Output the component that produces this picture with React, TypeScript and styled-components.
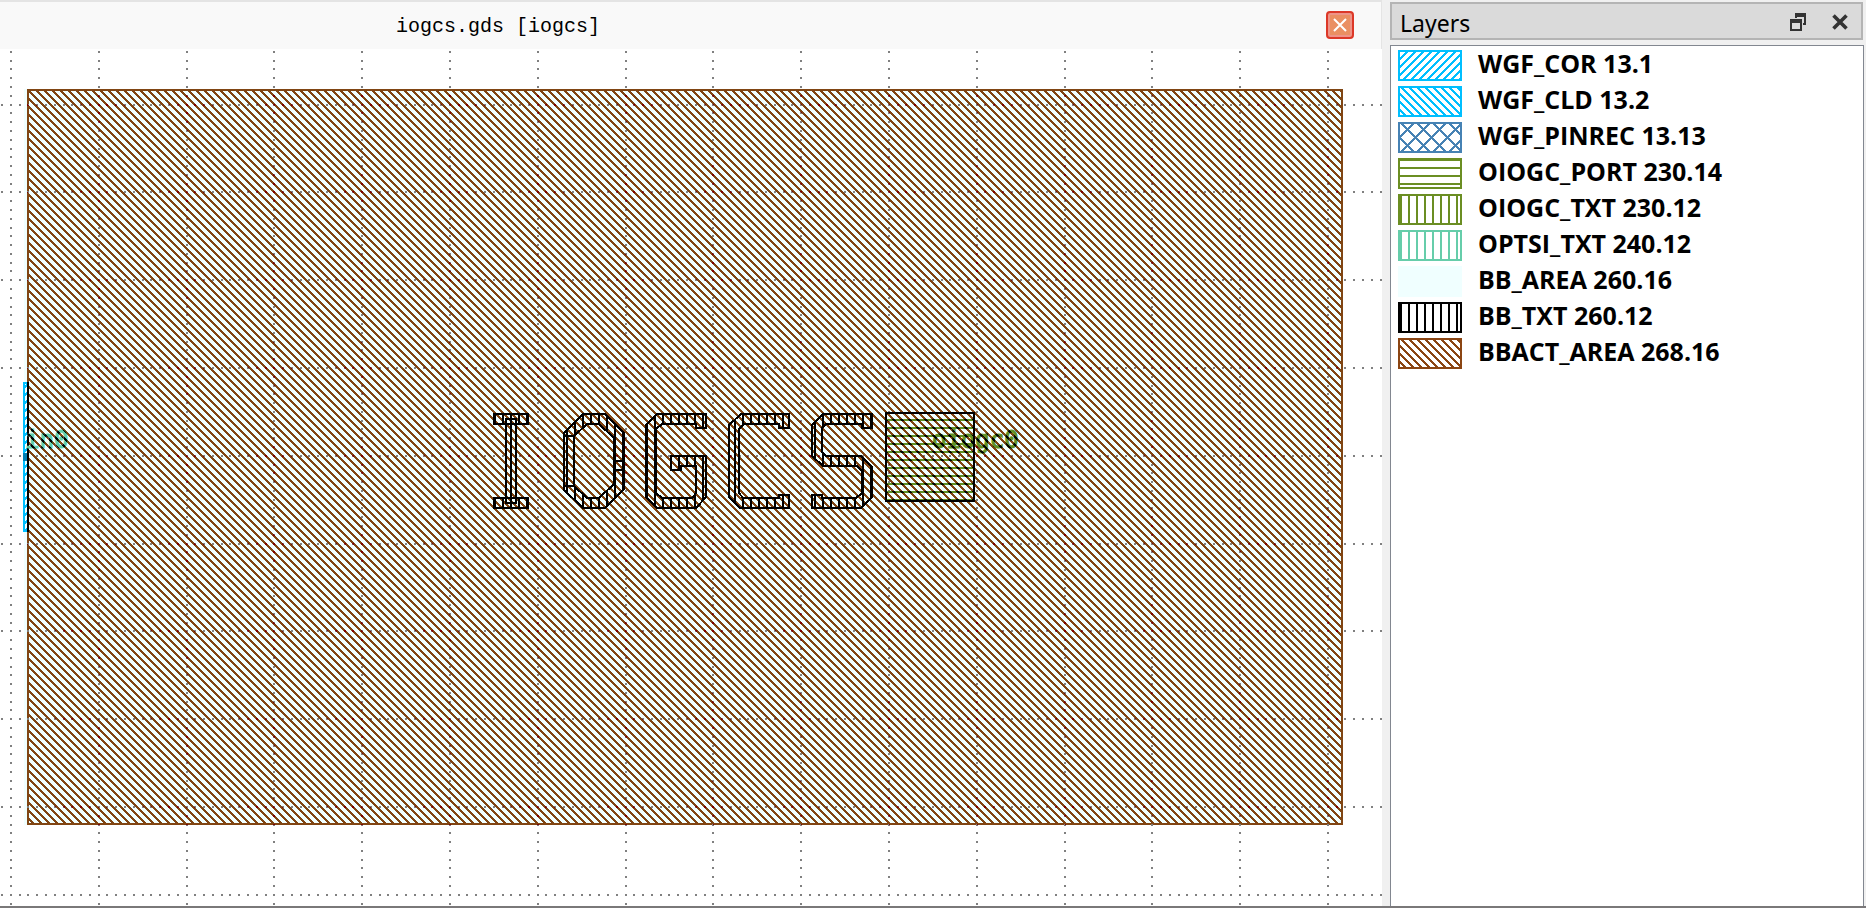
import React from "react";
import styled, { createGlobalStyle } from "styled-components";

const GlobalStyle = createGlobalStyle`
  * { box-sizing: border-box; }
  html, body, #root { height: 100%; }
  body { margin: 0; background: #f0f0f0; color: #000; overflow: hidden; }
`;

const Page = styled.div`
  display: grid;
  grid-template-columns: minmax(0, 1fr) 476px;
  column-gap: 8px;
  height: 100%;
  border-bottom: 2px solid #7a7879;
`;

const Viewer = styled.main`
  display: flex;
  flex-direction: column;
  min-width: 0;
  min-height: 0;
`;

const TabBar = styled.header`
  display: flex;
  align-items: center;
  justify-content: space-between;
  flex: none;
  height: 49px;
  padding: 0 27px 2px 396px;
  border-top: 2px solid #e4e4e4;
  border-right: 1px solid #e4e4e4;
  background: #f9f9f9;
`;

const TabTitle = styled.h1`
  margin: 0;
  padding-top: 4px;
  font: 400 20px/28px "Liberation Mono", monospace;
  white-space: pre;
`;

const TabClose = styled.button`
  display: grid;
  place-items: center;
  width: 28px;
  height: 28px;
  padding: 0;
  border: 2px solid #dc3828;
  border-radius: 4px;
  background: #ea8f62;
  box-shadow: inset 0 0 0 2px #ee9488;
`;

const Canvas = styled.svg`
  display: block;
  flex: 1;
  width: 100%;
  min-height: 0;
  background: #fff;
`;

const CanvasText = styled.text<{ $color: string }>`
  fill: ${(p) => p.$color};
  stroke: ${(p) => p.$color};
  stroke-width: 1px;
  font: 400 24px "DejaVu Sans Mono", monospace;
`;

const Dock = styled.aside`
  display: flex;
  flex-direction: column;
  gap: 5px;
  min-height: 0;
  padding: 2px 2px 0 0;
`;

const DockHeader = styled.header`
  display: flex;
  align-items: center;
  flex: none;
  height: 38px;
  margin-right: 1px;
  padding: 2px 11px 0 8px;
  border: 2px solid #b4b4b4;
  background: #dadada;
`;

const DockTitle = styled.h2`
  flex: 1;
  margin: 0;
  padding-top: 2px;
  font: 400 23px/30px "Noto Sans", sans-serif;
`;

const DockButton = styled.button`
  display: grid;
  place-items: center;
  width: 20px;
  height: 24px;
  margin-left: 22px;
  padding: 0;
  border: 0;
  background: transparent;
`;

const LayerList = styled.ul`
  flex: 1;
  min-height: 0;
  margin: 0;
  padding: 0 0 0 7px;
  overflow: hidden;
  list-style: none;
  border: 1px solid #828790;
  border-bottom: 0;
  background: #fff;
`;

const LayerRow = styled.li`
  display: flex;
  align-items: flex-start;
  gap: 16px;
  height: 36px;
`;

const SwatchBox = styled.svg`
  flex: none;
  margin-top: 4px;
`;

const LayerName = styled.span`
  font: 700 25px/34px "Open Sans", sans-serif;
  white-space: pre;
`;

type Fill = "slash" | "backslash" | "cross" | "rows" | "columns" | "solid";

const layers: { name: string; source: string; color: string; fill: Fill }[] = [
  { name: "WGF_COR", source: "13.1", color: "#00bfff", fill: "slash" },
  { name: "WGF_CLD", source: "13.2", color: "#00bfff", fill: "backslash" },
  { name: "WGF_PINREC", source: "13.13", color: "#4682b4", fill: "cross" },
  { name: "OIOGC_PORT", source: "230.14", color: "#6b8e23", fill: "rows" },
  { name: "OIOGC_TXT", source: "230.12", color: "#6b8e23", fill: "columns" },
  { name: "OPTSI_TXT", source: "240.12", color: "#66cdaa", fill: "columns" },
  { name: "BB_AREA", source: "260.16", color: "#f0ffff", fill: "solid" },
  { name: "BB_TXT", source: "260.12", color: "#000000", fill: "columns" },
  { name: "BBACT_AREA", source: "268.16", color: "#8b4513", fill: "backslash" },
];

/* One run of pixels per row, wrapped at the edge of the tile. */
const diagonal = (size: number, shift: number, direction: 1 | -1, run = 3) => {
  let d = "";
  for (let y = 0; y < size; y++) {
    const x = (((shift + direction * y) % size) + size) % size;
    d += `M${x} ${y}h${run}v1h-${run}z`;
    if (x + run > size) d += `M${x - size} ${y}h${run}v1h-${run}z`;
  }
  return d;
};

const tiles: Record<Fill, { size: number; d: string }> = {
  slash: { size: 8, d: diagonal(8, 1, -1) },
  backslash: { size: 8, d: diagonal(8, 1, 1) },
  cross: { size: 16, d: diagonal(16, 1, 1) + diagonal(16, 15, -1) },
  rows: { size: 8, d: "M0 1h8v2h-8z" },
  columns: { size: 8, d: "M2 0h2v8h-2z" },
  solid: { size: 8, d: "M0 0h8v8h-8z" },
};

function Swatch({ id, color, fill }: { id: string; color: string; fill: Fill }) {
  const tile = tiles[fill];
  return (
    <SwatchBox width="64" height="31" shapeRendering="crispEdges" aria-hidden="true">
      <pattern id={id} width={tile.size} height={tile.size} patternUnits="userSpaceOnUse">
        <path d={tile.d} fill={color} />
      </pattern>
      <rect width="64" height="31" fill={`url(#${id})`} />
      <rect x="1" y="1" width="62" height="29" fill="none" stroke={color} strokeWidth="2" />
    </SwatchBox>
  );
}

const GRID = 87.8;
const dotAt = (x: number, y: number) => `M${x} ${y}h2v2h-2z`;

function gridPath() {
  let d = "";
  for (let line = -1; line < 30; line++) {
    const lineX = Math.round(10 + line * GRID);
    const lineY = Math.floor(104 + line * GRID);
    for (let i = -10; i < 300; i++) {
      d += dotAt(Math.floor(10.4 + (i * GRID) / 10), lineY);
      if (i % 10 !== 0) d += dotAt(lineX, Math.floor(104.1 + (i * GRID) / 10));
    }
  }
  return d;
}

const grid = gridPath();

const glyphs = [
  "M494 414H528V424H494z M506 419H516V503H506z M511 419V503 M494 498H528V508H494z",
  "M583 414L605 414L624 433V489L605 508H583L564 490V433z M587 424H599L614 438V484L599 498H587L574 486V436z M564 436h10 M564 486h10 M614 461h10 M614 470h10",
  "M657 414H706V428H696V424H662L656 429V493L662 498H692L696 493V466H681V470H671V456H706V497L696 508H657L646 497V425z",
  "M741 414H789V428H779V424H744L739 429V493L743 498H779V495H789V508H740L729 497V425z",
  "M823 414H872V428H862V424H826L822 428V452L826 456H861L872 467V497L861 508H812V495H822V498H856L862 493V471L857 466H823L812 456V425z",
];

function Layout() {
  return (
    <Canvas shapeRendering="crispEdges" role="img" aria-label="Layout of cell iogcs">
      <defs>
        <pattern id="area" width="8" height="8" patternUnits="userSpaceOnUse">
          <path d={diagonal(8, 1, 1)} fill="#804513" />
        </pattern>
        <pattern id="areaOnGrid" width="8" height="8" patternUnits="userSpaceOnUse">
          <path d={diagonal(8, 1, 1)} fill="#800000" />
        </pattern>
        <pattern id="areaOnShape" width="8" height="8" patternUnits="userSpaceOnUse">
          <path d={diagonal(8, 1, 1)} fill="#000403" />
        </pattern>
        <pattern id="textHatch" width="8" height="8" patternUnits="userSpaceOnUse">
          <path d="M6 0h2v8h-2z" />
        </pattern>
        <pattern id="portHatch" width="8" height="8" patternUnits="userSpaceOnUse">
          <path d="M0 3h8v2h-8z" fill="#608e23" />
        </pattern>
        <pattern id="portMaskHatch" width="8" height="8" patternUnits="userSpaceOnUse">
          <path d="M0 3h8v2h-8z" fill="#fff" />
        </pattern>
        <pattern id="pinHatch" width="8" height="8" patternUnits="userSpaceOnUse">
          <path d={diagonal(8, 2, -1)} fill="#00bfff" />
        </pattern>
        <mask id="onGrid" maskUnits="userSpaceOnUse" x="27" y="89" width="1316" height="736">
          <path d={grid} fill="#fff" />
        </mask>
        <mask id="onShapes" maskUnits="userSpaceOnUse" x="27" y="89" width="1316" height="736">
          <rect x="886" y="413" width="88" height="88" fill="url(#portMaskHatch)" />
          <CanvasText x="25" y="448" $color="#fff">in0</CanvasText>
          <CanvasText x="932" y="448" $color="#fff">oiogc0</CanvasText>
        </mask>
      </defs>
      <g transform="translate(0 -49)">
        <rect x="24" y="89" width="1319" height="736" fill="#f0ffff" />
        <rect x="28" y="90" width="1314" height="734" fill="url(#area)" stroke="#804513" strokeWidth="2" />
        <path d={grid} fill="#808080" />
        <rect x="27" y="89" width="1316" height="736" fill="url(#areaOnGrid)" mask="url(#onGrid)" />

        <rect x="24" y="383" width="4" height="148" fill="url(#pinHatch)" stroke="#00bfff" strokeWidth="2" />
        <path d="M27 382h2v150h-2z" />
        <path d="M23 453h4v8h-4z" fill="#0080b4" />

        <rect x="886" y="413" width="88" height="88" fill="url(#portHatch)" />
        <CanvasText x="25" y="448" $color="#60cdaa">in0</CanvasText>
        <CanvasText x="932" y="448" $color="#608e23">oiogc0</CanvasText>
        <rect x="27" y="89" width="1316" height="736" fill="url(#areaOnShape)" mask="url(#onShapes)" />
        <rect x="886" y="413" width="88" height="88" fill="none" stroke="#000" strokeWidth="2" />

        {glyphs.map((d) => (
          <path key={d} d={d} fill="url(#textHatch)" fillRule="evenodd" stroke="#000" strokeWidth="2" />
        ))}
      </g>
    </Canvas>
  );
}

export default function App() {
  return (
    <>
      <GlobalStyle />
      <Page>
        <Viewer>
          <TabBar>
            <TabTitle>iogcs.gds [iogcs]</TabTitle>
            <TabClose type="button" aria-label="Close tab">
              <svg width="14" height="14" stroke="#fff" strokeWidth="2" aria-hidden="true">
                <path d="M1 1L13 13M13 1L1 13" />
              </svg>
            </TabClose>
          </TabBar>
          <Layout />
        </Viewer>
        <Dock>
          <DockHeader>
            <DockTitle>Layers</DockTitle>
            <DockButton type="button" aria-label="Float panel">
              <svg width="16" height="18" fill="#333" fillRule="evenodd" aria-hidden="true">
                <path d="M5 0H16V12H13V10H14V4H7V5H5z" />
                <path d="M0 6H12V18H0z M2 10V16H10V10z" />
              </svg>
            </DockButton>
            <DockButton type="button" aria-label="Close panel">
              <svg width="16" height="16" stroke="#333" strokeWidth="3.6" aria-hidden="true">
                <path d="M1.5 1.5L14.5 14.5M14.5 1.5L1.5 14.5" />
              </svg>
            </DockButton>
          </DockHeader>
          <LayerList>
            {layers.map((layer) => (
              <LayerRow key={layer.name}>
                <Swatch id={`swatch-${layer.name}`} color={layer.color} fill={layer.fill} />
                <LayerName>{`${layer.name} ${layer.source}`}</LayerName>
              </LayerRow>
            ))}
          </LayerList>
        </Dock>
      </Page>
    </>
  );
}
